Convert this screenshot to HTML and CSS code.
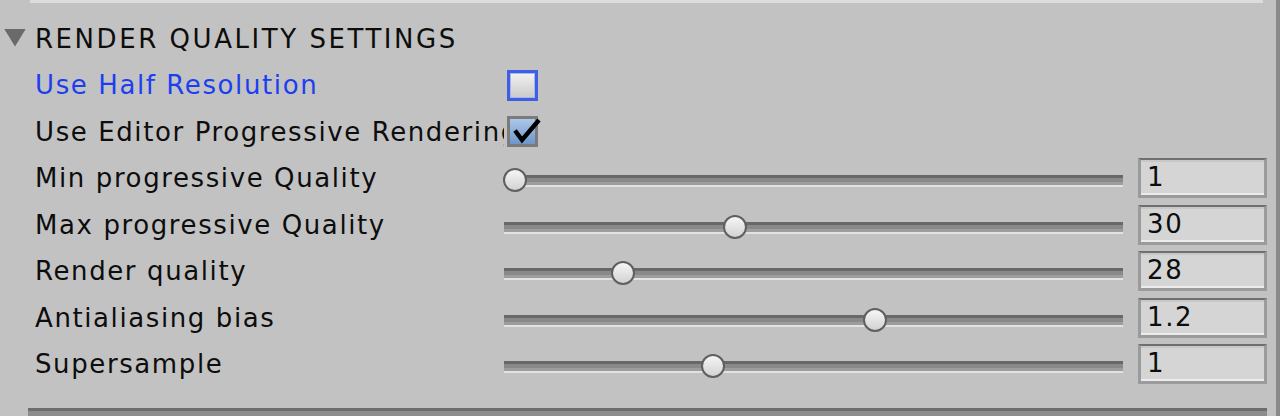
FILE: index.html
```html
<!DOCTYPE html>
<html>
<head>
<meta charset="utf-8">
<link rel="stylesheet" href="styles.css">
</head>
<body>
<div class="page">
  <div class="main">
    <div class="topbar"></div>
    <div class="header">
      <span class="tri"></span>
      <span class="htext">RENDER QUALITY SETTINGS</span>
    </div>
    <div class="row">
      <div class="label blue">Use Half Resolution</div>
      <div class="checkbox focused"></div>
    </div>
    <div class="row">
      <div class="label">Use Editor Progressive Rendering</div>
      <div class="checkbox checked">
        <svg class="check" width="40" height="34" viewBox="0 0 40 34"><polyline points="8,14.5 15,24 32,4" fill="none" stroke="#000" stroke-width="4.4" stroke-linejoin="miter"/></svg>
      </div>
    </div>
    <div class="row">
      <div class="label">Min progressive Quality</div>
      <div class="slider"><div class="track"></div><div class="thumb" style="left:-1px"></div></div>
      <div class="field">1</div>
    </div>
    <div class="row">
      <div class="label">Max progressive Quality</div>
      <div class="slider"><div class="track"></div><div class="thumb" style="left:219px"></div></div>
      <div class="field">30</div>
    </div>
    <div class="row">
      <div class="label">Render quality</div>
      <div class="slider"><div class="track"></div><div class="thumb" style="left:107px"></div></div>
      <div class="field">28</div>
    </div>
    <div class="row">
      <div class="label">Antialiasing bias</div>
      <div class="slider"><div class="track"></div><div class="thumb" style="left:359px"></div></div>
      <div class="field">1.2</div>
    </div>
    <div class="row">
      <div class="label">Supersample</div>
      <div class="slider"><div class="track"></div><div class="thumb" style="left:197px"></div></div>
      <div class="field">1</div>
    </div>
    <div class="bottombar"></div>
  </div>
  <div class="scroll"></div>
</div>
</body>
</html>
```
FILE: styles.css
```css
html, body {
  margin: 0;
  padding: 0;
}
body {
  width: 1280px;
  height: 416px;
  overflow: hidden;
  background: #c2c2c2;
  font-family: "DejaVu Sans", Verdana, sans-serif;
  font-size: 26px;
  color: #0d0d0d;
}
.page {
  display: flex;
  height: 416px;
}
.main {
  flex: 1;
  display: flex;
  flex-direction: column;
}
.scroll {
  width: 4px;
  background: #898989;
}
.topbar {
  height: 3px;
  margin-left: 30px;
  margin-right: 13px;
  background: #dcdcdc;
}
.header {
  height: 46.5px;
  margin-top: 12.25px;
  display: flex;
  align-items: center;
}
.tri {
  width: 22px;
  height: 18px;
  margin-left: 4px;
  margin-right: 9px;
  margin-top: -2px;
  background: #6a6a6a;
  clip-path: polygon(0 0, 100% 0, 50% 100%);
}
.htext {
  letter-spacing: 2.55px;
}
.row {
  height: 46.5px;
  display: flex;
  align-items: center;
  padding-left: 35px;
}
.label {
  width: 469px;
  flex: none;
  overflow: hidden;
  white-space: nowrap;
  letter-spacing: 1.6px;
}
.label.blue {
  color: #1b3ff0;
}
.checkbox {
  position: relative;
  width: 25px;
  height: 25px;
  margin-left: 3px;
  border: 3px solid #7b7b7b;
  background: linear-gradient(#f2f2f2, #c9c9c9);
}
.checkbox.focused {
  border-color: #3d5fe3;
  box-shadow: inset 0 0 0 1px #a9b6ee;
}
.checkbox.checked {
  background: linear-gradient(#aec7e9, #6e95cc);
}
.check {
  position: absolute;
  left: -3px;
  top: -3px;
}
.slider {
  position: relative;
  width: 619px;
  height: 26px;
  flex: none;
}
.track {
  position: absolute;
  left: 0;
  right: 0;
  top: 10px;
  height: 12px;
  background: linear-gradient(#686868 0, #686868 3px, #898989 3px, #898989 7px, #9d9d9d 7px, #9d9d9d 10px, #e2e2e2 10px, #e2e2e2 12px);
}
.thumb {
  position: absolute;
  top: 3px;
  width: 20px;
  height: 20px;
  border: 2px solid #5f5f5f;
  border-radius: 50%;
  background: linear-gradient(#f6f6f6, #d2d2d2);
}
.field {
  margin-left: 15px;
  flex: none;
  box-sizing: border-box;
  width: 129px;
  height: 40px;
  border-top: 2px solid #6f6f6f;
  border-left: 3px solid #9b9b9b;
  border-right: 3px solid #9b9b9b;
  border-bottom: 3px solid #9b9b9b;
  background: #d5d5d5;
  box-shadow: inset 0 -2px 0 #ececec, inset 0 2px 0 #c8c8c8;
  padding-left: 6px;
  line-height: 35px;
  letter-spacing: 1.6px;
}
.bottombar {
  margin-top: 20.75px;
  margin-left: 28px;
  margin-right: 9px;
  height: 8px;
  background: linear-gradient(#6d6d6d 0, #6d6d6d 3px, #8d8d8d 3px);
}
```
